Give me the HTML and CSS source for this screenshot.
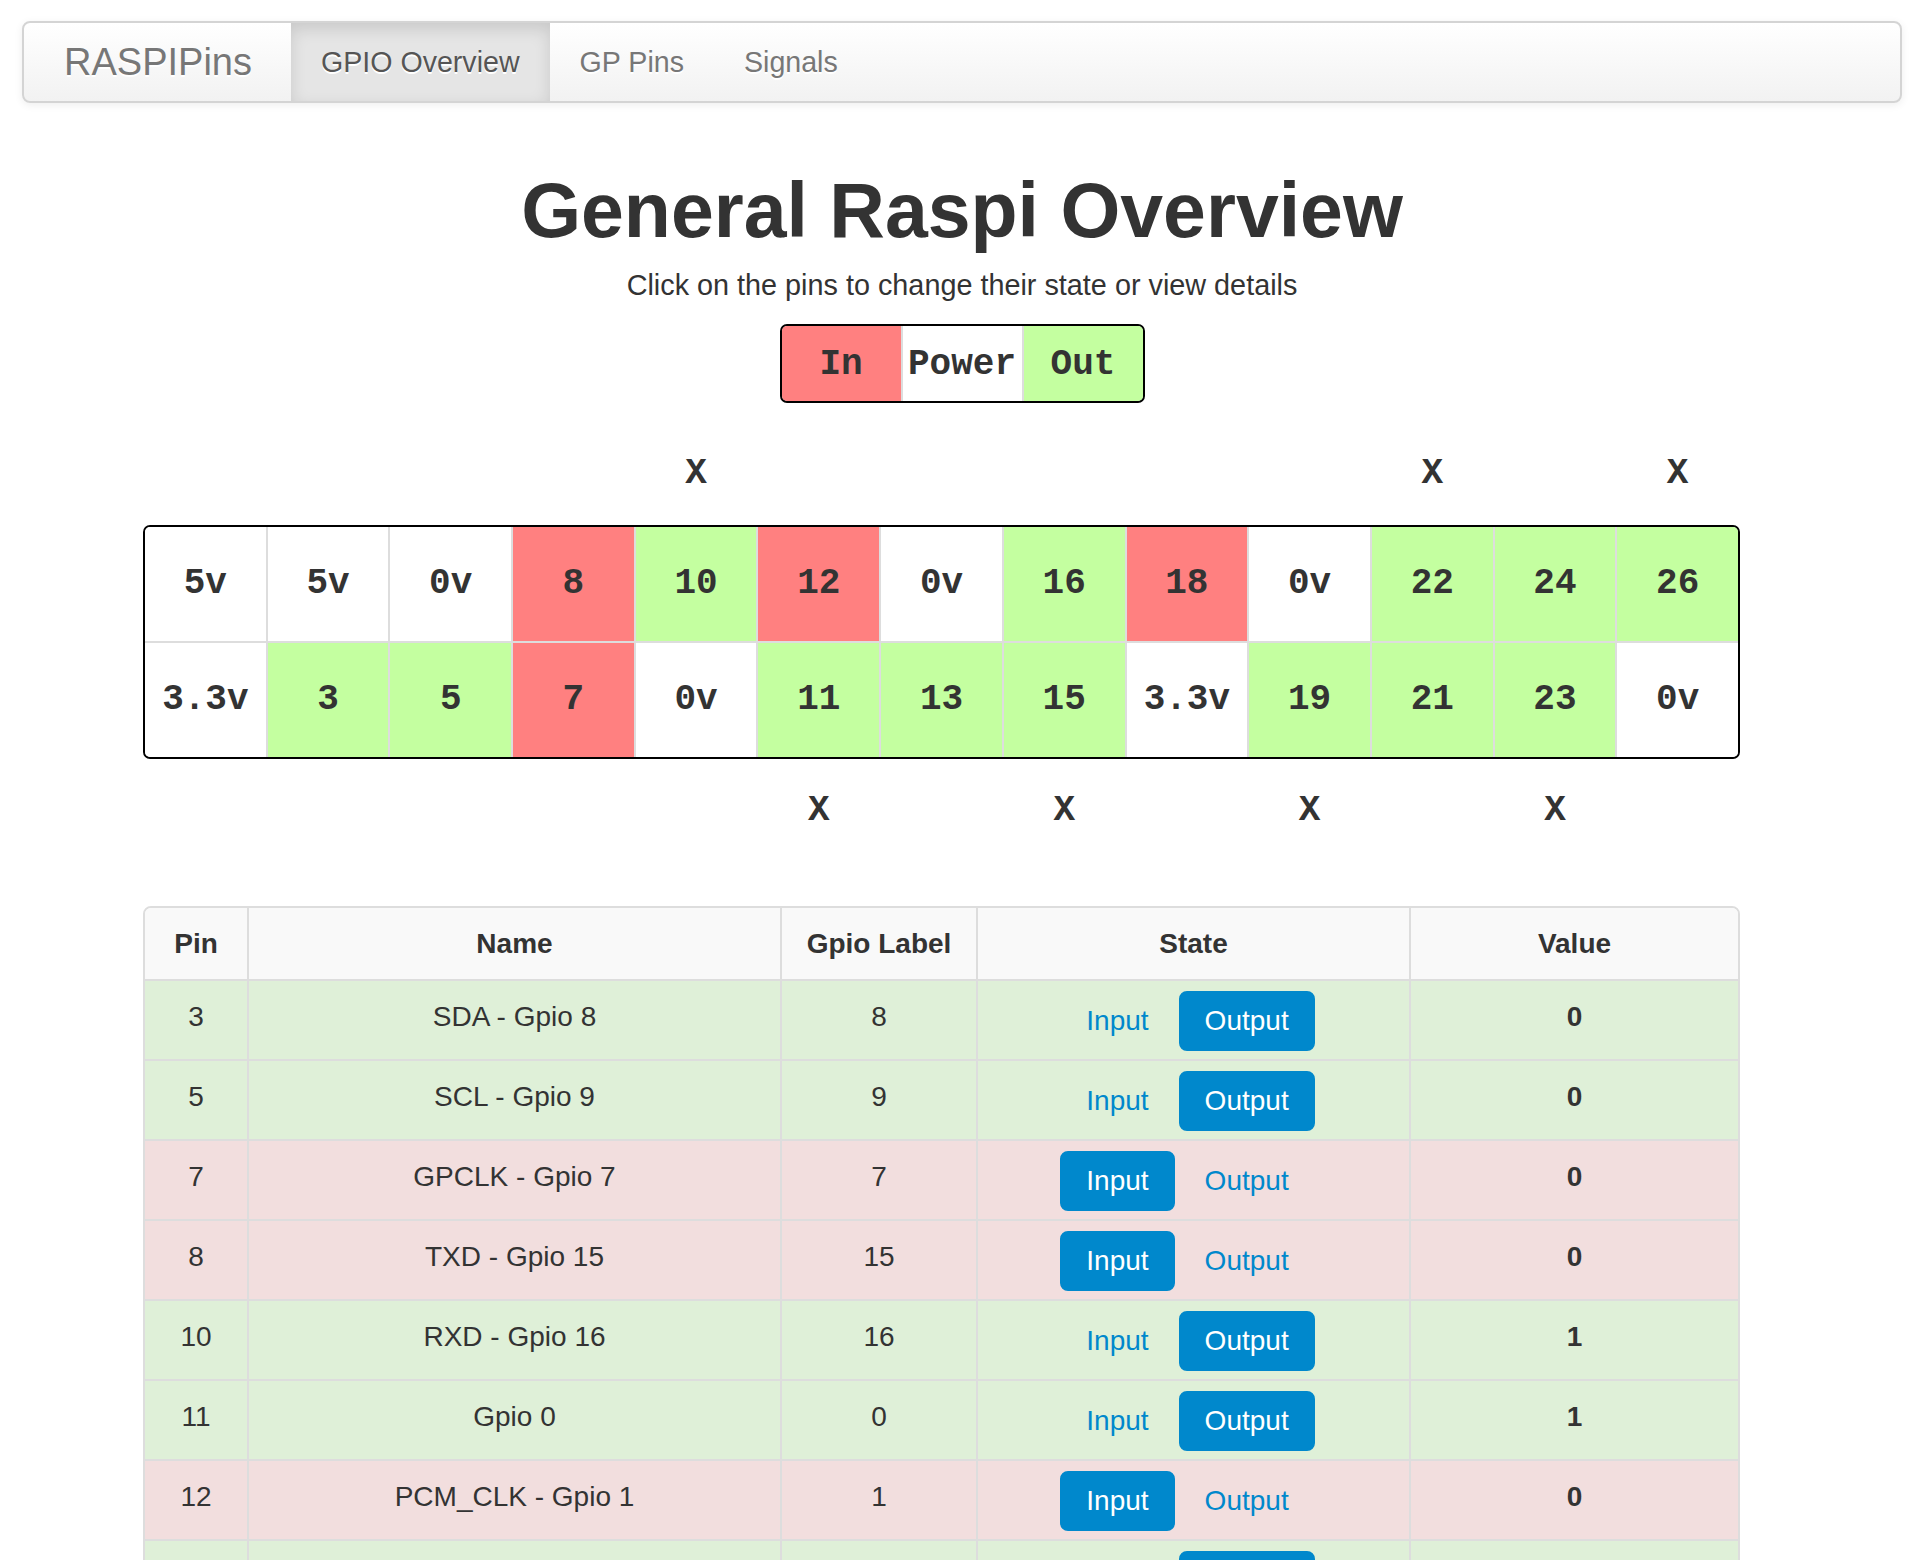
FILE: index.html
```html
<!DOCTYPE html>
<html lang="en">
<head>
<meta charset="utf-8">
<title>RASPIPins - GPIO Overview</title>
<link rel="stylesheet" href="styles.css">
</head>
<body>
<div class="container">
  <div class="navbar">
    <a class="brand" href="#">RASPIPins</a>
    <ul class="nav">
      <li class="active"><a href="#">GPIO Overview</a></li>
      <li><a href="#">GP Pins</a></li>
      <li><a href="#">Signals</a></li>
    </ul>
  </div>

  <div class="page-header">
    <h1>General Raspi Overview</h1>
    <p class="lead">Click on the pins to change their state or view details</p>
    <div class="legend">
      <span class="in">In</span>
      <span class="power">Power</span>
      <span class="out">Out</span>
    </div>
  </div>

  <div class="board-area">
    <div class="xrow top">
      <span></span><span></span><span></span><span></span><span>X</span><span></span><span></span><span></span><span></span><span></span><span>X</span><span></span><span>X</span>
    </div>
    <div class="board">
      <div class="pin">5v</div>
      <div class="pin">5v</div>
      <div class="pin">0v</div>
      <div class="pin in">8</div>
      <div class="pin out">10</div>
      <div class="pin in">12</div>
      <div class="pin">0v</div>
      <div class="pin out">16</div>
      <div class="pin in">18</div>
      <div class="pin">0v</div>
      <div class="pin out">22</div>
      <div class="pin out">24</div>
      <div class="pin out">26</div>

      <div class="pin">3.3v</div>
      <div class="pin out">3</div>
      <div class="pin out">5</div>
      <div class="pin in">7</div>
      <div class="pin">0v</div>
      <div class="pin out">11</div>
      <div class="pin out">13</div>
      <div class="pin out">15</div>
      <div class="pin">3.3v</div>
      <div class="pin out">19</div>
      <div class="pin out">21</div>
      <div class="pin out">23</div>
      <div class="pin">0v</div>
    </div>
    <div class="xrow bottom">
      <span></span><span></span><span></span><span></span><span></span><span>X</span><span></span><span>X</span><span></span><span>X</span><span></span><span>X</span><span></span>
    </div>

    <table class="gpio-table">
      <colgroup>
        <col class="c-pin"><col class="c-name"><col class="c-label"><col class="c-state"><col class="c-value">
      </colgroup>
      <thead>
        <tr><th>Pin</th><th>Name</th><th>Gpio Label</th><th>State</th><th>Value</th></tr>
      </thead>
      <tbody>
        <tr class="success"><td>3</td><td>SDA - Gpio 8</td><td>8</td><td class="state"><div class="sw"><a class="btn btn-link">Input</a><a class="btn btn-primary">Output</a></div></td><td class="val">0</td></tr>
        <tr class="success"><td>5</td><td>SCL - Gpio 9</td><td>9</td><td class="state"><div class="sw"><a class="btn btn-link">Input</a><a class="btn btn-primary">Output</a></div></td><td class="val">0</td></tr>
        <tr class="error"><td>7</td><td>GPCLK - Gpio 7</td><td>7</td><td class="state"><div class="sw"><a class="btn btn-primary">Input</a><a class="btn btn-link">Output</a></div></td><td class="val">0</td></tr>
        <tr class="error"><td>8</td><td>TXD - Gpio 15</td><td>15</td><td class="state"><div class="sw"><a class="btn btn-primary">Input</a><a class="btn btn-link">Output</a></div></td><td class="val">0</td></tr>
        <tr class="success"><td>10</td><td>RXD - Gpio 16</td><td>16</td><td class="state"><div class="sw"><a class="btn btn-link">Input</a><a class="btn btn-primary">Output</a></div></td><td class="val">1</td></tr>
        <tr class="success"><td>11</td><td>Gpio 0</td><td>0</td><td class="state"><div class="sw"><a class="btn btn-link">Input</a><a class="btn btn-primary">Output</a></div></td><td class="val">1</td></tr>
        <tr class="error"><td>12</td><td>PCM_CLK - Gpio 1</td><td>1</td><td class="state"><div class="sw"><a class="btn btn-primary">Input</a><a class="btn btn-link">Output</a></div></td><td class="val">0</td></tr>
        <tr class="success"><td>13</td><td>Gpio 2</td><td>2</td><td class="state"><div class="sw"><a class="btn btn-link">Input</a><a class="btn btn-primary">Output</a></div></td><td class="val">0</td></tr>
      </tbody>
    </table>
  </div>
</div>
</body>
</html>
```

FILE: styles.css
```css
html, body {
  margin: 0;
  padding: 0;
  background: #fff;
}

body {
  font-family: "Liberation Sans", Arial, Helvetica, sans-serif;
  font-size: 28px;
  line-height: 40px;
  color: #333;
}

.container {
  width: 1880px;
  margin: 0 auto;
}

/* Navbar */
.navbar {
  margin-top: 21px;
  height: 82px;
  box-sizing: border-box;
  display: flex;
  align-items: stretch;
  border: 2px solid #d4d4d4;
  border-radius: 8px;
  background: linear-gradient(to bottom, #ffffff, #f2f2f2);
  box-shadow: 0 2px 8px rgba(0, 0, 0, 0.07);
  overflow: hidden;
}

.brand {
  display: block;
  padding: 0 39px 0 40px;
  font-size: 38px;
  line-height: 78px;
  color: #777;
  text-decoration: none;
  text-shadow: 0 2px 0 #fff;
}

.nav {
  display: flex;
  list-style: none;
  margin: 0;
  padding: 0;
}

.nav a {
  display: block;
  padding: 0 30px;
  font-size: 28.6px;
  line-height: 78px;
  color: #777;
  text-decoration: none;
  text-shadow: 0 2px 0 #fff;
}

.nav .active a {
  color: #555;
  background: #e5e5e5;
  box-shadow: inset 0 6px 16px rgba(0, 0, 0, 0.125);
}

/* Header */
.page-header {
  text-align: center;
}

h1 {
  margin: 67px 0 0;
  font-size: 77px;
  line-height: 80px;
  font-weight: bold;
  color: #333;
}

.lead {
  margin: 15px 0 0;
  font-size: 28.8px;
  line-height: 40px;
}

.legend {
  display: flex;
  width: max-content;
  margin: 19px auto 0;
  gap: 2px;
  background: #ddd;
  border: 2px solid #000;
  border-radius: 7px;
  overflow: hidden;
}

.legend span {
  width: 119px;
  height: 75px;
  line-height: 78px;
  text-align: center;
  font-family: "Liberation Mono", "Courier New", monospace;
  font-weight: bold;
  font-size: 36px;
  color: #333;
  background: #fff;
}

.legend .in { background: #ff8080; }
.legend .out { background: #c4ffa0; }

/* Board */
.board-area {
  width: 1597px;
  margin-left: 121px;
}

.xrow {
  display: grid;
  grid-template-columns: repeat(13, 1fr);
  column-gap: 2px;
  padding: 0 2px;
  height: 60px;
  font-family: "Liberation Mono", "Courier New", monospace;
  font-weight: bold;
  font-size: 36px;
  line-height: 60px;
  text-align: center;
  color: #333;
}

.xrow.top { margin-top: 41px; }
.xrow.bottom { margin-top: 22px; }

.board {
  display: grid;
  grid-template-columns: repeat(13, 1fr);
  gap: 2px;
  margin-top: 21px;
  background: #ddd;
  border: 2px solid #000;
  border-radius: 7px;
  overflow: hidden;
}

.pin {
  height: 114px;
  line-height: 114px;
  text-align: center;
  font-family: "Liberation Mono", "Courier New", monospace;
  font-weight: bold;
  font-size: 36px;
  color: #333;
  background: #fff;
}

.pin.in { background: #ff8080; }
.pin.out { background: #c4ffa0; }

/* Table */
.gpio-table {
  width: 1597px;
  margin-top: 65px;
  border-collapse: separate;
  border-spacing: 0;
  border: 2px solid #ddd;
  border-radius: 8px;
  table-layout: fixed;
}

.c-pin { width: 102px; }
.c-name { width: 533px; }
.c-label { width: 196px; }
.c-state { width: 433px; }

.gpio-table th,
.gpio-table td {
  text-align: center;
  vertical-align: top;
  border-left: 2px solid #ddd;
  font-size: 28px;
  line-height: 40px;
}

.gpio-table th:first-child,
.gpio-table td:first-child {
  border-left: 0;
}

.gpio-table th {
  padding: 16px 8px 15px;
  background: #f9f9f9;
  font-weight: bold;
}

.gpio-table th:first-child { border-top-left-radius: 6px; }
.gpio-table th:last-child { border-top-right-radius: 6px; }

.gpio-table td {
  padding: 16px 8px 8px;
  border-top: 2px solid #ddd;
}

.gpio-table tr.success td { background: #dff0d8; }
.gpio-table tr.error td { background: #f2dede; }

.gpio-table td.val { font-weight: bold; }

.gpio-table td.state {
  padding: 10px 18px 8px 6px;
}

.sw {
  display: flex;
  justify-content: center;
  gap: 4px;
}

.btn {
  display: block;
  box-sizing: border-box;
  height: 60px;
  padding: 0 24px;
  border: 2px solid transparent;
  border-radius: 8px;
  font-size: 28px;
  line-height: 56px;
  text-decoration: none;
  cursor: pointer;
}

.btn-primary {
  background: #0088cc;
  border-color: #0088cc;
  color: #fff;
}

.btn-link {
  background: transparent;
  color: #0088cc;
}
```
